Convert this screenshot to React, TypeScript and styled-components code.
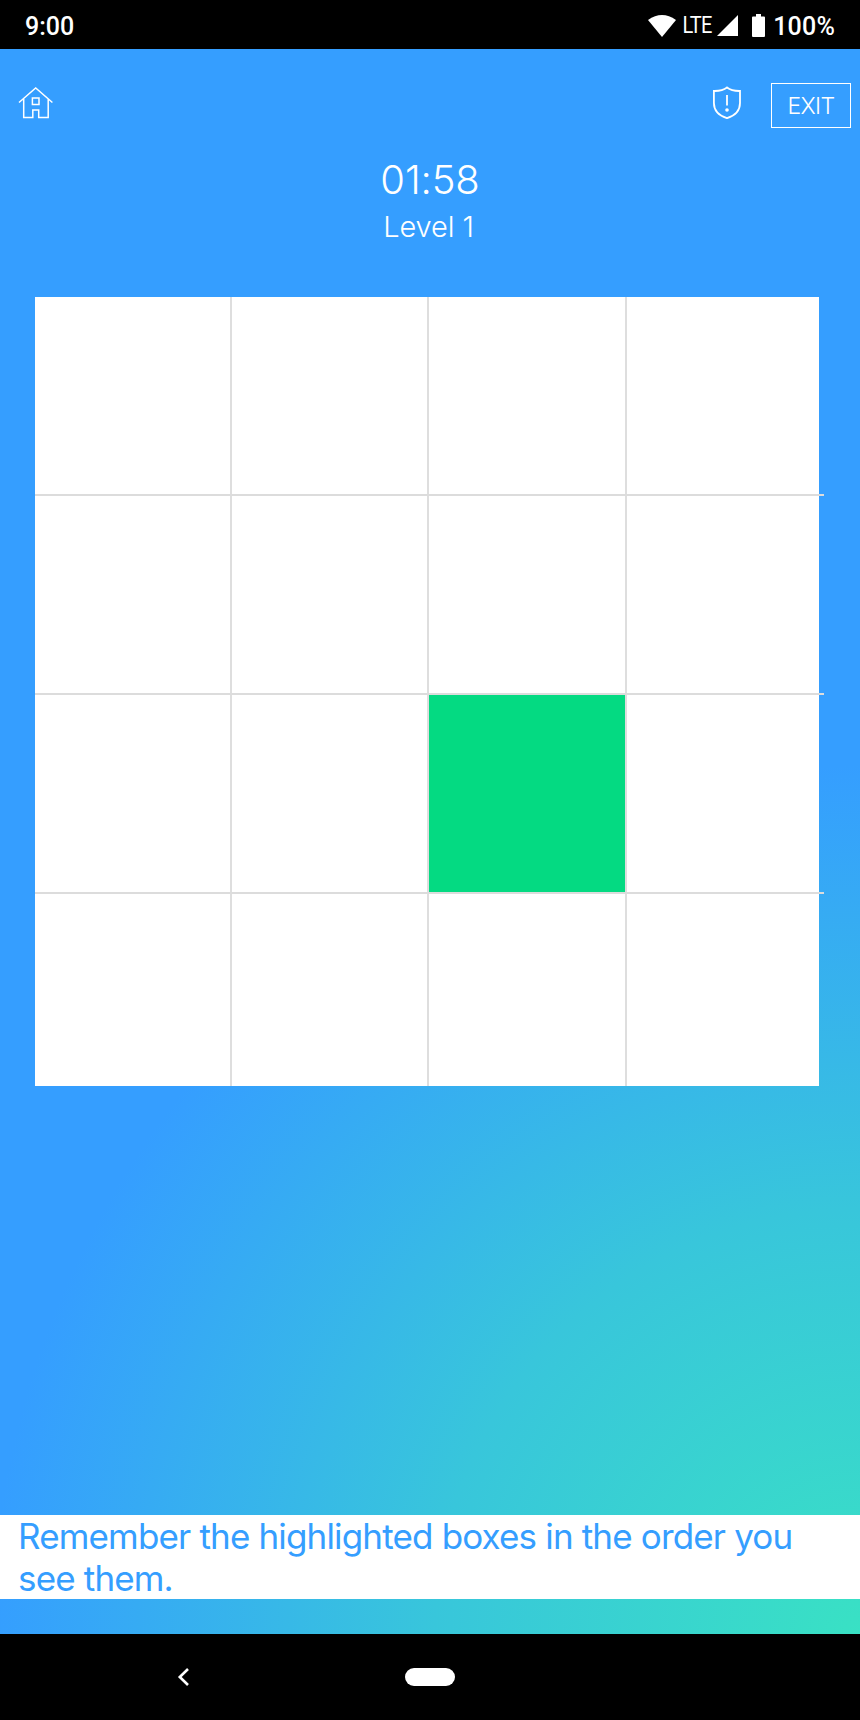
import React from "react";
import styled, { createGlobalStyle } from "styled-components";

const GlobalStyle = createGlobalStyle`
  * { box-sizing: border-box; }
  body { margin: 0; }
`;

const Screen = styled.div`
  width: 860px;
  height: 1720px;
  display: flex;
  flex-direction: column;
  overflow: hidden;
  background: #000;
  color: #fff;
  font-family: Inter, "Liberation Sans", sans-serif;
`;

const StatusBar = styled.header`
  height: 49px;
  flex: none;
  display: flex;
  align-items: center;
  justify-content: space-between;
  padding: 2px 25px 0 25px;
  font-family: Roboto, sans-serif;
  line-height: 30px;
`;

const StatusGroup = styled.div`
  display: flex;
  align-items: center;
`;

const StatusText = styled.span<{ $left?: number; $spacing?: number }>`
  padding-top: 2px;
  font-size: 25px;
  font-weight: 500;
  letter-spacing: ${(p) => p.$spacing ?? 0}px;
  margin-left: ${(p) => p.$left ?? 0}px;
`;

const NetworkLabel = styled.span`
  margin-left: 2px;
  font-size: 23px;
  font-weight: 400;
  letter-spacing: -0.8px;
  line-height: 28px;
  transform: scaleX(0.87);
  transform-origin: right;
`;

const Glyph = styled.svg<{ $left?: number }>`
  display: block;
  flex: none;
  margin-left: ${(p) => p.$left ?? 0}px;
`;

const Game = styled.main`
  flex: none;
  height: 1585px;
  display: flex;
  flex-direction: column;
  background: radial-gradient(circle 868px at 100% 100%, #39e1c4 0%, #38c6db 49%, #359eff 100%);
`;

const Toolbar = styled.nav`
  height: 79px;
  flex: none;
  display: flex;
  align-items: flex-start;
  justify-content: space-between;
  padding: 34px 9px 0 18px;
`;

const Actions = styled.div`
  display: flex;
  align-items: flex-start;
`;

const ExitButton = styled.button`
  width: 80px;
  height: 45px;
  margin-left: 29.5px;
  padding: 0;
  border: 1.5px solid #fff;
  background: transparent;
  color: #fff;
  font: 300 23px/42px Inter, sans-serif;
  letter-spacing: -0.6px;
`;

const Timer = styled.div`
  margin-top: 25px;
  height: 50px;
  font-size: 40px;
  font-weight: 300;
  line-height: 53px;
  letter-spacing: -0.1px;
  text-align: center;
`;

const Level = styled.div`
  height: 42px;
  padding-right: 3px;
  font-size: 29px;
  font-weight: 300;
  line-height: 48px;
  letter-spacing: -0.1px;
  text-align: center;
`;

const Board = styled.section`
  width: 784px;
  height: 789px;
  flex: none;
  margin: 52px 0 0 35px;
  background: #fff;
`;

const Row = styled.div`
  width: 789px;
  height: 199px;
  display: grid;
  grid-template-columns: 197px 197px 198px 1fr;
  border-bottom: 2px solid #dcdcdc;
  &:last-child {
    width: 784px;
    height: 192px;
    border-bottom: 0;
  }
`;

const Cell = styled.div<{ $lit: boolean }>`
  border-right: 2px solid #dedede;
  background: ${(p) => (p.$lit ? "#04da82" : "transparent")};
  &:last-child {
    border-right: 0;
  }
`;

const Message = styled.p`
  height: 84px;
  flex: none;
  margin: auto 0 35px;
  padding: 0 40px 0 18px;
  background: #fff;
  color: #359eff;
  font-size: 35px;
  line-height: 42px;
  letter-spacing: -0.84px;
`;

const NavBar = styled.footer`
  flex: 1;
  display: grid;
  grid-template-columns: 1fr 50px 1fr;
  align-items: center;
`;

const BackButton = styled.div`
  padding-left: 176.5px;
`;

const HomePill = styled.div`
  height: 18px;
  border-radius: 9px;
  background: #fff;
`;

const LIT_CELL = 10;

export default function App() {
  return (
    <Screen>
      <GlobalStyle />
      <StatusBar>
        <StatusText>9:00</StatusText>
        <StatusGroup>
          <Glyph width="28" height="22" viewBox="0 0 28 22" fill="#fff">
            <path d="M0 5Q14-5 28 5L14 22Z" />
          </Glyph>
          <NetworkLabel>LTE</NetworkLabel>
          <Glyph $left={5} width="21" height="21" viewBox="0 0 21 21" fill="#fff">
            <path d="M21 0V21H0Z" />
          </Glyph>
          <Glyph $left={14} width="13" height="23" viewBox="0 0 13 23" fill="#fff">
            <path d="M4 0H9V2.5H12Q13 2.5 13 3.5V22Q13 23 12 23H1Q0 23 0 22V3.5Q0 2.5 1 2.5H4Z" />
          </Glyph>
          <StatusText $left={8} $spacing={0.2}>100%</StatusText>
        </StatusGroup>
      </StatusBar>
      <Game>
        <Toolbar>
          <Glyph width="36" height="36" viewBox="0 0 36 36" fill="none" stroke="#fff" strokeWidth="1.5">
            <path d="M1 19.5L17.7 5L34.4 19.5M5.7 16V34.5H14.8V27H20.7V34.5H30.2V16M14.4 15H21V21.4H14.4Z" />
          </Glyph>
          <Actions>
            <Glyph width="30" height="36" viewBox="0 0 30 36" fill="none" stroke="#fff" strokeWidth="1.8">
              <path d="M15 4.5C11.5 7.3 7 8.1 1.9 8V20C1.9 28 7.5 32.8 15 35.2C22.5 32.8 28 28 28 20V8C23 8.1 18.5 7.3 15 4.5Z" />
              <path d="M15 12V22.5" />
              <circle cx="15" cy="27" r="1.8" fill="#fff" stroke="none" />
            </Glyph>
            <ExitButton>EXIT</ExitButton>
          </Actions>
        </Toolbar>
        <Timer>01:58</Timer>
        <Level>Level 1</Level>
        <Board>
          {[0, 1, 2, 3].map((row) => (
            <Row key={row}>
              {[0, 1, 2, 3].map((col) => (
                <Cell key={col} $lit={row * 4 + col === LIT_CELL} />
              ))}
            </Row>
          ))}
        </Board>
        <Message>Remember the highlighted boxes in the order you see them.</Message>
      </Game>
      <NavBar>
        <BackButton>
          <Glyph width="13" height="18" viewBox="0 0 13 18" fill="none" stroke="#fff" strokeWidth="2.6">
            <path d="M11 1L2.8 9L11 17" />
          </Glyph>
        </BackButton>
        <HomePill />
      </NavBar>
    </Screen>
  );
}
